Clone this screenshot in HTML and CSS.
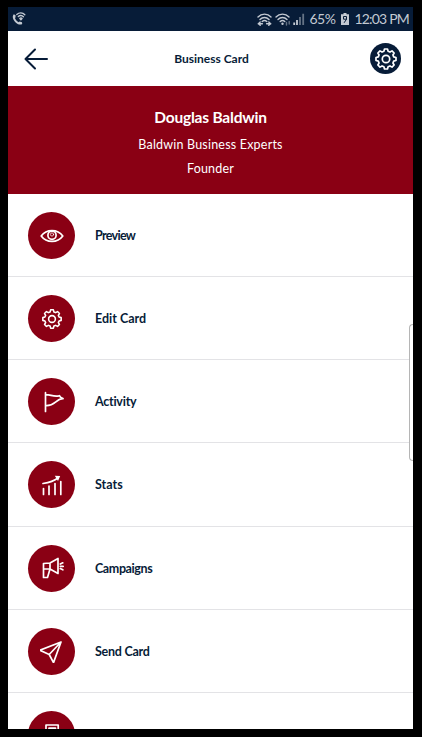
FILE: index.html
```html
<!DOCTYPE html>
<html lang="en">
<head>
    <meta charset="UTF-8">
    <meta name="viewport" content="width=device-width, initial-scale=1.0">
    <title>Business Card</title>
    <link rel="stylesheet" href="styles.css">
</head>
<body>

    <svg class="defs" width="0" height="0">
        <symbol id="gear" viewBox="-12 -12 24 24">
            <path d="M-2.1-7.7L-1.5-10H1.5L2.1-7.7L3.96-6.93L6.01-8.13L8.13-6.01L6.93-3.96L7.7-2.1L10-1.5V1.5L7.7 2.1L6.93 3.96L8.13 6.01L6.01 8.13L3.96 6.93L2.1 7.7L1.5 10H-1.5L-2.1 7.7L-3.96 6.93L-6.01 8.13L-8.13 6.01L-6.93 3.96L-7.7 2.1L-10 1.5V-1.5L-7.7-2.1L-6.93-3.96L-8.13-6.01L-6.01-8.13L-3.96-6.93Z"/>
            <circle r="3.7"/>
        </symbol>
    </svg>

    <div class="screen">
        <div class="status-bar">
            <svg class="call-icon" width="14" height="14" viewBox="0 0 14 14">
                <path class="fill" d="M1.8 2.2L3.6 3.3L3.5 5.4L2.9 6.1C3.6 8 5 9.4 6.8 10.2L7.6 9.5L10 10.2L10.2 12C8.6 13.2 6 12.6 3.9 10.7C.8 8 -.2 4 1.8 2.2Z"/>
                <path d="M4.8 2.5C7.2.2 10.6.3 12.8 2.7M6.3 4.6C7.8 3.1 10 3.1 11.4 4.7"/>
                <path d="M7.8 6.4C8.5 5.7 9.4 5.7 10 6.5L8.9 7.7Z"/>
            </svg>
            <div class="status-right">
                <svg width="15" height="13" viewBox="0 0 15 13">
                    <path d="M1 4C4.6.2 10.4.2 14 4M3 6.4C5.6 3.8 9.4 3.8 12 6.4M5.2 8.5C6.6 7.2 8.4 7.2 9.8 8.5M1.2 10.7H5.4M3.2 9L1.4 10.7L3.2 12.3M9.6 10.7H13.8M11.8 9L13.6 10.7L11.8 12.3"/>
                </svg>
                <svg width="16" height="13" viewBox="0 0 16 13">
                    <path d="M1 4C4.6.2 10.4.2 14 4M3 6.4C5.6 3.8 9.4 3.8 12 6.4M5.2 8.5C6.6 7.2 8.4 7.2 9.8 8.5"/>
                    <circle class="fill" cx="7.5" cy="10.8" r="1.2"/>
                    <path class="dim" d="M11.5 9.5V12M14.2 8.5V11"/>
                </svg>
                <svg class="signal" width="12" height="12" viewBox="0 0 12 12">
                    <path d="M1.2 9.5V12M4 7V12"/>
                    <path class="dim" d="M7 4V12M10.2.8V12"/>
                </svg>
                <span class="battery-text">65%</span>
                <svg class="battery" width="8" height="12" viewBox="0 0 8 12">
                    <path class="fill" d="M2.5 0H5.5V1.3H8V12H0V1.3H2.5Z"/>
                    <path class="mark" d="M5.5 6.2H2.5V3.5H5.5V6.2L3.3 9.5"/>
                </svg>
                <span class="time">12:03 PM</span>
            </div>
        </div>

        <div class="header">
            <svg class="back" width="24" height="22" viewBox="0 0 24 22">
                <path d="M11 1.5L1.5 11L11 20.5M1.5 11H23"/>
            </svg>
            <h1 class="title">Business Card</h1>
            <div class="settings">
                <svg width="24" height="24"><use href="#gear"/></svg>
            </div>
        </div>

        <div class="banner">
            <h2 class="name">Douglas Baldwin</h2>
            <p class="company">Baldwin Business Experts</p>
            <p class="role">Founder</p>
        </div>

        <div class="menu">
            <div class="row">
                <div class="circle">
                    <svg width="24" height="24" viewBox="-12 -12 24 24">
                        <path d="M-10.8 0C-5.5-7.2 5.5-7.2 10.8 0C5.5 7.2-5.5 7.2-10.8 0Z"/>
                        <circle cy="-.7" r="4.1"/>
                        <circle class="pupil" cy="-1.5" r="1.6"/>
                    </svg>
                </div>
                <span class="label preview">Preview</span>
            </div>
            <div class="row">
                <div class="circle">
                    <svg width="22" height="22"><use href="#gear"/></svg>
                </div>
                <span class="label edit">Edit Card</span>
            </div>
            <div class="row">
                <div class="circle">
                    <svg width="24" height="24" viewBox="-12 -12 24 24">
                        <path d="M-6.5-9.3V9.5M-6.5-7.3C-2-7.8 2-4.5 7.5-6.3C8-4.8 9.5-4 11-3.4C4-3.6 3 4.5-6.5 3.5"/>
                    </svg>
                </div>
                <span class="label activity">Activity</span>
            </div>
            <div class="row">
                <div class="circle">
                    <svg width="24" height="24" viewBox="-12 -12 24 24">
                        <path d="M-8.5 9.5V3.5M-3 9.5V1M3 9.5V-1.5M8.8 9.5V-3.5M-9-1.5C-3-2.5 2-4 6-7"/>
                        <path class="fill" d="M2.8-9.2L8.2-9L6-4Z"/>
                    </svg>
                </div>
                <span class="label stats">Stats</span>
            </div>
            <div class="row">
                <div class="circle">
                    <svg width="24" height="24" viewBox="-12 -12 24 24">
                        <path d="M-8.5-4.5L-2-5L6-9.5V5.5L-2 1L-4.5 9.5H-8.5ZM-2-5V1H-8.3M8.3-4L10.8-5.2M8.3-1.7H11.2M8.3.6L10.8 1.8"/>
                    </svg>
                </div>
                <span class="label campaigns">Campaigns</span>
            </div>
            <div class="row">
                <div class="circle">
                    <svg width="24" height="24" viewBox="-12 -12 24 24">
                        <path d="M9-9L-12-.8L-2.8 3.5L1.5 11.6ZM9-9L-2.8 3.5"/>
                    </svg>
                </div>
                <span class="label send">Send Card</span>
            </div>
            <div class="row">
                <div class="circle">
                    <svg width="24" height="24" viewBox="-12 -12 24 24">
                        <path d="M-6-9H6.2V9H-6ZM-3-5.8H3.5V-2H-3Z"/>
                    </svg>
                </div>
            </div>
        </div>

        <div class="edge-handle"></div>
    </div>

</body>
</html>
```
FILE: styles.css
```css
* {
    box-sizing: border-box;
}

body {
    margin: 0;
    padding: 7px 9px 8px 8px;
    height: 737px;
    background: #000;
    font-family: Lato, sans-serif;
    font-variant-ligatures: none;
    color: #071c38;
    overflow: hidden;
}

.defs {
    position: absolute;
}

svg {
    display: block;
    fill: none;
    stroke: currentColor;
    stroke-width: 1.7;
    stroke-linejoin: round;
    stroke-linecap: round;
}

.fill {
    fill: currentColor;
    stroke: none;
}

.screen {
    position: relative;
    height: 722px;
    background: #fff;
    overflow: hidden;
}

/* Status bar */
.status-bar {
    display: flex;
    justify-content: space-between;
    align-items: center;
    height: 24px;
    padding: 0 5px 0 4px;
    background: #071c38;
    color: #c3c9d2;
}

.status-bar svg {
    stroke-width: 1.4;
}

.status-right {
    display: flex;
    align-items: center;
    font-size: 14px;
    line-height: 24px;
}

.status-right svg + svg {
    margin-left: 3px;
}

.dim {
    opacity: 0.5;
}

.status-right .signal {
    margin-left: 2px;
    stroke-width: 1.8;
    stroke-linecap: butt;
}

.battery-text {
    margin: 0 6px 0 4px;
    letter-spacing: -0.5px;
}

.mark {
    stroke: #071c38;
    stroke-width: 1;
}

.time {
    margin-left: 5px;
    margin-right: -1px;
    letter-spacing: -0.8px;
    white-space: nowrap;
}

/* Header */
.header {
    display: flex;
    justify-content: space-between;
    align-items: center;
    height: 55px;
    padding: 0 12px 0 16px;
}

.back {
    stroke-width: 2;
}

.title {
    margin: 0 0 0 5px;
    font-size: 12px;
    font-weight: bold;
}

.settings {
    display: flex;
    justify-content: center;
    align-items: center;
    width: 31px;
    height: 31px;
    border-radius: 50%;
    background: #071c38;
    color: #fff;
}

/* Owner details */
.banner {
    height: 108px;
    padding-top: 19px;
    background: #8a0014;
    color: #fff;
    text-align: center;
}

.name {
    margin: 0;
    font-size: 15.5px;
    line-height: 24px;
    letter-spacing: -0.2px;
}

.company,
.role {
    margin: 4px 0 0;
    font-size: 12.5px;
    line-height: 23px;
    letter-spacing: 0.2px;
}

.role {
    margin-top: 1px;
}

/* Menu */
.row {
    display: flex;
    align-items: center;
    height: 83.15px;
    padding: 1px 0 0 20px;
    border-bottom: 1px solid #e3e3e6;
}

.circle {
    display: flex;
    justify-content: center;
    align-items: center;
    width: 47px;
    height: 47px;
    margin-right: 20px;
    border-radius: 50%;
    background: #8a0014;
    color: #fff;
}

.pupil {
    stroke-width: 1;
    opacity: 0.7;
}

.label {
    font-size: 12.5px;
    font-weight: bold;
}

.preview {
    letter-spacing: -0.7px;
}

.activity,
.send {
    letter-spacing: -0.25px;
}

.campaigns {
    letter-spacing: -0.4px;
}

/* Pull-out panel handle on the right edge */
.edge-handle {
    position: absolute;
    top: 317px;
    right: 0;
    width: 4px;
    height: 137px;
    border: 1px solid #b5b5b5;
    border-right: 0;
    border-radius: 4px 0 0 4px;
    background: #fff;
}
```
